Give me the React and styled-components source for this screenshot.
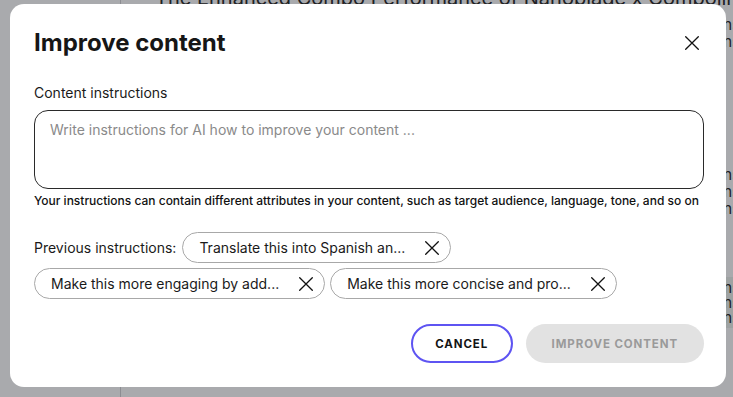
import React, { useState } from "react";
import styled, { createGlobalStyle } from "styled-components";

const GlobalStyle = createGlobalStyle`
  html, body {
    margin: 0;
    padding: 0;
    width: 733px;
    height: 397px;
    overflow: hidden;
    background: #ffffff;
    font-family: Inter, "Noto Sans", "Liberation Sans", sans-serif;
  }
  * {
    box-sizing: border-box;
  }
`;

const Page = styled.div`
  display: flex;
  height: 397px;
  overflow: hidden;
`;

const Sidebar = styled.aside`
  width: 121px;
  flex-shrink: 0;
  border-right: 1px solid #d0d0d4;
`;

const Content = styled.main`
  flex: 1;
  min-width: 0;
  padding: 0 0 0 34px;
  overflow: hidden;
  color: #222;
`;

const Heading = styled.h1`
  margin: -12px 0 0;
  font-size: 20px;
  font-weight: 400;
  line-height: 20px;
  white-space: nowrap;
`;

const Paragraph = styled.p`
  margin: ${(p) => p.$top || 0}px 0 0;
  font-size: 15px;
  line-height: 17px;
  white-space: nowrap;
`;

const Band = styled.div`
  margin-top: ${(p) => p.$top}px;
  background: #eef3ee;
  padding: 3px 0;
  font-size: 15px;
  line-height: 15px;
  white-space: nowrap;
`;

const Overlay = styled.div`
  position: fixed;
  inset: 0;
  background: rgba(30, 32, 40, 0.38);
  padding: 4px 0 0 10px;
`;

const Dialog = styled.div`
  width: 716px;
  height: 383px;
  background: #ffffff;
  border-radius: 14px;
  padding: 24px 22px 24px 24px;
  display: flex;
  flex-direction: column;
  color: #161616;
`;

const Header = styled.div`
  display: flex;
  align-items: center;
  justify-content: space-between;
`;

const Title = styled.h2`
  margin: 0;
  font-size: 24px;
  font-weight: 700;
  line-height: 29px;
`;

const CloseButton = styled.button`
  border: none;
  background: none;
  padding: 0;
  margin-right: 5px;
  width: 14px;
  height: 14px;
  display: flex;
  cursor: pointer;
  color: #111;
`;

const Label = styled.label`
  margin-top: 27px;
  font-size: 14px;
  line-height: 17px;
  color: #1a1a1a;
`;

const TextArea = styled.textarea`
  margin-top: 9px;
  height: 79px;
  width: 100%;
  resize: none;
  border: 1px solid #2a2a2a;
  border-radius: 14px;
  padding: 8px 15px;
  font-family: inherit;
  font-size: 14px;
  line-height: 22px;
  color: #1a1a1a;
  outline: none;
  caret-color: #111;

  &::placeholder {
    color: #8a8a8a;
  }
`;

const Hint = styled.p`
  margin: 4px 0 0;
  font-size: 12px;
  line-height: 15px;
  font-weight: 500;
  color: #111;
`;

const Chips = styled.div`
  margin-top: 24px;
  display: flex;
  flex-wrap: wrap;
  align-items: center;
  gap: 5px 5px;
`;

const ChipsLabel = styled.span`
  font-size: 14px;
  color: #1a1a1a;
  margin-right: 1px;
`;

const Chip = styled.div`
  height: 31px;
  display: inline-flex;
  align-items: center;
  gap: 20px;
  padding: 0 11px 0 16px;
  border: 1px solid #a8a8a8;
  border-radius: 16px;
  font-size: 14px;
  color: #1a1a1a;
`;

const ChipRemove = styled.button`
  border: none;
  background: none;
  padding: 0;
  width: 14px;
  height: 14px;
  display: flex;
  cursor: pointer;
  color: #111;
`;

const Footer = styled.div`
  margin-top: auto;
  display: flex;
  justify-content: flex-end;
  gap: 13px;
`;

const Button = styled.button`
  height: 39px;
  padding: 0 ${(p) => (p.$primary ? 26 : 22.5)}px;
  border-radius: 20px;
  border: ${(p) => (p.$primary ? "none" : "2px solid #5e54f2")};
  background: ${(p) => (p.$primary ? "#e2e2e2" : "#ffffff")};
  color: ${(p) => (p.$primary ? "#9a9a9a" : "#141414")};
  font-family: inherit;
  font-size: 11.5px;
  font-weight: 700;
  letter-spacing: 0.9px;
  cursor: ${(p) => (p.disabled ? "default" : "pointer")};
`;

const Cross = ({ size = 14, stroke = 1.3 }) => (
  <svg width={size} height={size} viewBox="0 0 14 14" fill="none">
    <path
      d="M0.7 0.7 L13.3 13.3 M13.3 0.7 L0.7 13.3"
      stroke="currentColor"
      strokeWidth={stroke}
      strokeLinecap="round"
    />
  </svg>
);

const initialChips = [
  "Translate this into Spanish an...",
  "Make this more engaging by add...",
  "Make this more concise and pro...",
];

const filler =
  "Short sessions make the combo easier to land and the results are much more consistent across every single match we tracked";

export default function App() {
  const [text, setText] = useState("");
  const [chips, setChips] = useState(initialChips);

  return (
    <>
      <GlobalStyle />
      <Page>
        <Sidebar />
        <Content>
          <Heading>The Enhanced Combo Performance of Nanoblade x Combolines in Short Sessions</Heading>
          <Paragraph $top={8}>{filler}</Paragraph>
          <Paragraph>{filler}</Paragraph>
          <Paragraph $top={116}>{filler}</Paragraph>
          <Paragraph>{filler}</Paragraph>
          <Paragraph>{filler}</Paragraph>
          <Band $top={60}>
            {filler}
            <br />
            {filler}
            <br />
            {filler}
          </Band>
        </Content>
      </Page>
      <Overlay>
        <Dialog role="dialog" aria-labelledby="improve-title">
          <Header>
            <Title id="improve-title">Improve content</Title>
            <CloseButton aria-label="Close">
              <Cross />
            </CloseButton>
          </Header>
          <Label htmlFor="instructions">Content instructions</Label>
          <TextArea
            id="instructions"
            autoFocus
            value={text}
            onChange={(e) => setText(e.target.value)}
            placeholder="Write instructions for AI how to improve your content ..."
          />
          <Hint>
            Your instructions can contain different attributes in your content, such as target
            audience, language, tone, and so on
          </Hint>
          <Chips>
            <ChipsLabel>Previous instructions:</ChipsLabel>
            {chips.map((c) => (
              <Chip key={c}>
                {c}
                <ChipRemove
                  aria-label="Remove"
                  onClick={() => setChips(chips.filter((x) => x !== c))}
                >
                  <Cross />
                </ChipRemove>
              </Chip>
            ))}
          </Chips>
          <Footer>
            <Button>CANCEL</Button>
            <Button $primary disabled={!text}>
              IMPROVE CONTENT
            </Button>
          </Footer>
        </Dialog>
      </Overlay>
    </>
  );
}
